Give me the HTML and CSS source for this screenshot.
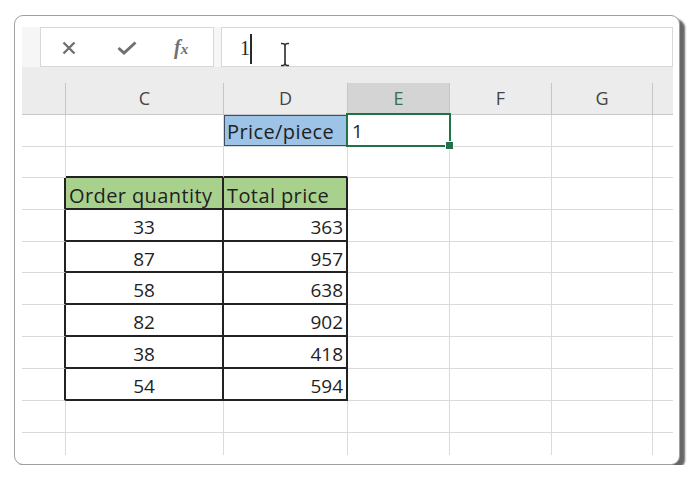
FILE: index.html
```html
<!DOCTYPE html>
<html>
<head>
<meta charset="utf-8">
<link rel="stylesheet" href="styles.css">
</head>
<body>
<div class="card">
  <div class="fbar">
    <div class="fbtns">
      <svg class="ic-x" width="14" height="14" viewBox="0 0 14 14"><path d="M1.5 1.5 L12.5 12.5 M12.5 1.5 L1.5 12.5" stroke="#707070" stroke-width="2.4" fill="none"/></svg>
      <svg class="ic-ok" width="20" height="14" viewBox="0 0 20 14"><path d="M1.5 7 L7 12 L18.5 1.5" stroke="#707070" stroke-width="3" fill="none"/></svg>
      <span class="fx">f<span class="fx-x">x</span></span>
    </div>
    <div class="finput">
      <span class="fval">1</span>
      <span class="caret"></span>
      <svg class="ibeam" width="10" height="25" viewBox="0 0 10 25"><path d="M1 1.5 Q5 1 5 4 Q5 1 9 1.5 M5 4 V21 M1 23.5 Q5 24 5 21 Q5 24 9 23.5" stroke="#2b2b2b" stroke-width="1.6" fill="none"/></svg>
    </div>
  </div>

  <div class="colhead">
    <div class="ch"></div>
    <div class="ch">C</div>
    <div class="ch">D</div>
    <div class="ch ch-sel">E</div>
    <div class="ch">F</div>
    <div class="ch">G</div>
    <div class="ch ch-end"></div>
  </div>

  <div class="grid">
    <!-- row 1 -->
    <div class="c"></div>
    <div class="c"></div>
    <div class="c blue lbl">Price/piece</div>
    <div class="c active">1</div>
    <div class="c"></div>
    <div class="c"></div>
    <div class="c nr"></div>
    <!-- row 2 -->
    <div class="c"></div>
    <div class="c tb"></div>
    <div class="c tb"></div>
    <div class="c"></div>
    <div class="c"></div>
    <div class="c"></div>
    <div class="c nr"></div>
    <!-- row 3 -->
    <div class="c tr"></div>
    <div class="c tr tb green lbl">Order quantity</div>
    <div class="c tr tb green lbl">Total price</div>
    <div class="c"></div>
    <div class="c"></div>
    <div class="c"></div>
    <div class="c nr"></div>
    <!-- row 4 -->
    <div class="c tr"></div>
    <div class="c tr tb ctr">33</div>
    <div class="c tr tb rt">363</div>
    <div class="c"></div>
    <div class="c"></div>
    <div class="c"></div>
    <div class="c nr"></div>
    <!-- row 5 -->
    <div class="c tr"></div>
    <div class="c tr tb ctr">87</div>
    <div class="c tr tb rt">957</div>
    <div class="c"></div>
    <div class="c"></div>
    <div class="c"></div>
    <div class="c nr"></div>
    <!-- row 6 -->
    <div class="c tr"></div>
    <div class="c tr tb ctr">58</div>
    <div class="c tr tb rt">638</div>
    <div class="c"></div>
    <div class="c"></div>
    <div class="c"></div>
    <div class="c nr"></div>
    <!-- row 7 -->
    <div class="c tr"></div>
    <div class="c tr tb ctr">82</div>
    <div class="c tr tb rt">902</div>
    <div class="c"></div>
    <div class="c"></div>
    <div class="c"></div>
    <div class="c nr"></div>
    <!-- row 8 -->
    <div class="c tr"></div>
    <div class="c tr tb ctr">38</div>
    <div class="c tr tb rt">418</div>
    <div class="c"></div>
    <div class="c"></div>
    <div class="c"></div>
    <div class="c nr"></div>
    <!-- row 9 -->
    <div class="c tr"></div>
    <div class="c tr tb ctr">54</div>
    <div class="c tr tb rt">594</div>
    <div class="c"></div>
    <div class="c"></div>
    <div class="c"></div>
    <div class="c nr"></div>
    <!-- row 10 -->
    <div class="c"></div>
    <div class="c"></div>
    <div class="c"></div>
    <div class="c"></div>
    <div class="c"></div>
    <div class="c"></div>
    <div class="c nr"></div>
    <!-- row 11 -->
    <div class="c nb"></div>
    <div class="c nb"></div>
    <div class="c nb"></div>
    <div class="c nb"></div>
    <div class="c nb"></div>
    <div class="c nb"></div>
    <div class="c nb nr"></div>
  </div>
</div>
</body>
</html>
```

FILE: styles.css
```css
* { box-sizing: border-box; }

body {
  margin: 0;
  padding: 15px 0 0 14px;
  background: #ffffff;
  font-family: "Open Sans", "Noto Sans", sans-serif;
}

.card {
  width: 666px;
  height: 450px;
  background: #ffffff;
  border: 1px solid #a0a0a0;
  border-radius: 9px;
  box-shadow: 5px 4px 2px #666666;
  padding: 11px 6px 9px 7px;
}

/* formula bar */
.fbar {
  display: flex;
  gap: 7px;
  height: 40px;
  padding-left: 18px;
  background: #f6f6f6;
}

.fbtns {
  width: 174px;
  display: flex;
  align-items: center;
  background: #ffffff;
  border: 1px solid #d8d8d8;
  padding-left: 21px;
}

.ic-x { margin-right: 41px; margin-top: 1px; }
.ic-ok { margin-right: 37px; margin-top: 2px; }

.fx {
  font-family: "Liberation Serif", "DejaVu Serif", serif;
  font-style: italic;
  font-weight: bold;
  font-size: 20px;
  color: #707070;
  line-height: 1;
}
.fx-x { font-size: 15px; }

.finput {
  flex: 1;
  display: flex;
  align-items: center;
  background: #ffffff;
  border: 1px solid #d8d8d8;
  padding-left: 18px;
}

.fval {
  font-family: "Liberation Serif", "DejaVu Serif", serif;
  font-size: 20px;
  color: #2a2a2a;
  line-height: 1;
  margin-top: 2px;
}

.caret {
  width: 2px;
  height: 30px;
  background: #2a2a2a;
  margin-left: 0;
  margin-top: 4px;
}

.ibeam {
  align-self: flex-end;
  margin-left: 28px;
  margin-bottom: -1px;
}

/* column header band */
.colhead {
  display: grid;
  grid-template-columns: 44px 158px 124px 102px 102px 101px 20px;
  height: 48px;
  padding-top: 16px;
  background: #ececec;
  border-bottom: 1px solid #c8c8c8;
}

.ch {
  border-right: 1px solid #c6c6c6;
  font-size: 18px;
  line-height: 31px;
  text-align: center;
  color: #444444;
}
.ch-sel {
  background: #d4d4d4;
  color: #3d6b4c;
}
.ch-end { border-right: none; }

/* cell grid */
.grid {
  display: grid;
  grid-template-columns: 44px 158px 124px 102px 102px 101px 20px;
  grid-template-rows: 32px 31px 32px 32px 31px 32px 32px 32px 32px 32px 22px;
}

.c {
  display: flex;
  align-items: center;
  padding: 4px 3px 0;
  border-right: 1px solid #dadada;
  border-bottom: 1px solid #dadada;
  font-size: 19px;
  color: #1f1f1f;
  white-space: nowrap;
}

.lbl { font-size: 20px; letter-spacing: 0.4px; }

.nr { border-right: none; }
.nb { border-bottom: none; }

.tr { border-right: 2px solid #222222; }
.tb { border-bottom: 2px solid #222222; }

.ctr { justify-content: center; }
.rt { justify-content: flex-end; }

.green { background: #a9d18e; }

.blue {
  background: #9dc3e6;
  box-shadow: inset 0 0 0 1px #3e4e62;
  padding-top: 1px;
}

.active {
  position: relative;
  padding-left: 4px;
  padding-top: 1px;
}
.active::after {
  content: "";
  position: absolute;
  left: -2px;
  top: -2px;
  right: -2px;
  bottom: -1px;
  border: 2px solid #217346;
}
.active::before {
  content: "";
  position: absolute;
  right: -5px;
  bottom: -4px;
  width: 7px;
  height: 7px;
  background: #217346;
  border: 1px solid #ffffff;
  z-index: 2;
}
```
